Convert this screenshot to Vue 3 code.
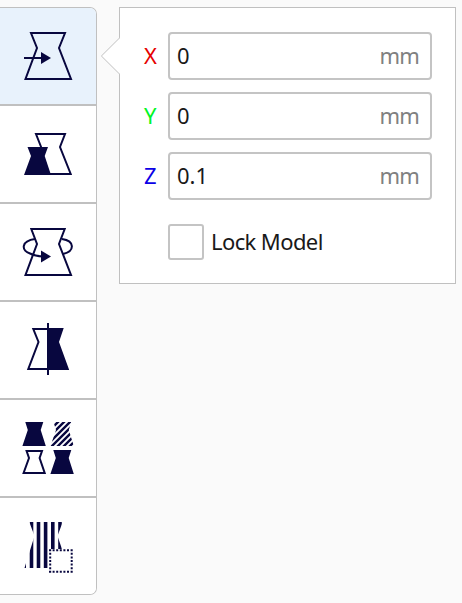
<script setup>
import { ref } from 'vue'

const axes = ref([
  { name: 'X', value: '0' },
  { name: 'Y', value: '0' },
  { name: 'Z', value: '0.1' },
])
</script>

<template>
  <main class="stage">
    <nav class="toolbar">
      <button class="tool active" aria-label="Move">
        <svg viewBox="0 8 96 96">
          <path class="line" d="M31 33H65L59 48L71 79H25.5L37 48Z" />
          <path class="line" d="M24 58H43" />
          <path class="solid" d="M41 52L51 58L41 64Z" />
        </svg>
      </button>
      <button class="tool" aria-label="Scale">
        <svg viewBox="0 106 96 96">
          <path class="line" d="M41.5 148L36 134H65L60 147L70.7 174H49" />
          <path class="solid" d="M27.5 147H48L44.7 156L51 175H24L31 156Z" />
        </svg>
      </button>
      <button class="tool" aria-label="Rotate">
        <svg viewBox="0 204 96 96">
          <path class="line" d="M31.3 229H64.7L59 244L71 275H25.5L37 244Z" />
          <path class="line" d="M35 239C21 241 21 250 30 253.5Q35 256 43 256.5M62 239C75 241 75 251 63 254" />
          <path class="solid" d="M41 250.5L51 256.5L41 262.5Z" />
        </svg>
      </button>
      <button class="tool" aria-label="Mirror">
        <svg viewBox="0 302 96 96">
          <path class="line" d="M48 329H33.3L38.5 342L28.3 369H48" />
          <path class="solid" d="M48 328H63.7L59 342L69.2 370H48Z" />
          <path class="line" d="M48 323V375" />
        </svg>
      </button>
      <button class="tool" aria-label="Per model settings">
        <svg viewBox="0 400 96 96">
          <defs>
            <clipPath id="hatched"><path d="M53.5 422H71.2L68.8 430L73.8 446H50.5L56 430Z" /></clipPath>
          </defs>
          <path class="solid" d="M25.3 422H43.3L40.7 430L45.8 446H22.4L27.8 430Z" />
          <path
            class="hatch"
            clip-path="url(#hatched)"
            d="M46 434L64 416M46 440L70 416M46 446L76 416M46 452L80 418M50 454L80 424M56 454L80 430M62 454L80 436M68 454L80 442"
          />
          <path class="line" d="M26.6 451H42L39.6 458L44.7 473H23.6L29 458Z" />
          <path class="solid" d="M53.3 450H71.3L68.7 458L73.8 474H50.4L55.8 458Z" />
        </svg>
      </button>
      <button class="tool" aria-label="Support blocker">
        <svg viewBox="0 498 96 96">
          <defs>
            <clipPath id="striped"><path d="M29.3 522H62.7L57.5 536L63 552V568H24.5L34.5 536Z" /></clipPath>
          </defs>
          <path class="stripes" clip-path="url(#striped)" d="M24.2 522V568M31.5 522V568M38.5 522V568M45.6 522V568M52.8 522V568M60 522V568" />
          <path class="clear" d="M49 549H73V573H49Z" />
          <path class="dots" d="M49 550.3H73M49 571.7H73M50.2 549.2V573M71.7 549.2V573" />
        </svg>
      </button>
    </nav>

    <section class="panel">
      <svg class="pointer" viewBox="0 0 20 39">
        <path d="M20 .5L1.4 19L20 37.5" />
      </svg>
      <label v-for="axis in axes" :key="axis.name" class="axis">
        <span class="name" :class="axis.name.toLowerCase()">{{ axis.name }}</span>
        <span class="field"><span>{{ axis.value }}</span><span class="unit">mm</span></span>
      </label>
      <label class="lock"><span class="box"></span><span class="caption">Lock Model</span></label>
    </section>
  </main>
</template>

<style>
body {
  background: #fafafa;
}
</style>

<style scoped>
.stage {
  display: flex;
  align-items: flex-start;
  gap: 22px;
  box-sizing: border-box;
  width: 462px;
  height: 603px;
  padding-top: 7px;
  background: #fafafa;
  font-family: "Noto Sans", sans-serif;
  font-size: 22px;
  line-height: 30px;
  color: #191919;
}
.toolbar {
  box-sizing: border-box;
  width: 97px;
  height: 588px;
  flex: none;
  overflow: hidden;
  border: 1px solid #c0c0c0;
  border-left: 0;
  border-radius: 0 7px 7px 0;
  background: #fff;
}
.tool {
  display: block;
  box-sizing: content-box;
  width: 96px;
  height: 96px;
  padding: 0;
  border: 0;
  background: #fff;
}
.tool + .tool {
  border-top: 2px solid #c0c0c0;
}
.tool.active {
  background: #e8f2fc;
}
.tool svg {
  display: block;
  width: 96px;
  height: 96px;
}
.line {
  fill: none;
  stroke: #08073f;
  stroke-width: 2;
}
.solid {
  fill: #08073f;
}
.hatch {
  fill: none;
  stroke: #08073f;
  stroke-width: 2.4;
}
.stripes {
  fill: none;
  stroke: #08073f;
  stroke-width: 3.6;
}
.clear {
  fill: #fff;
}
.dots {
  fill: none;
  stroke: #08073f;
  stroke-width: 2;
  stroke-dasharray: 2 1.6;
}
.panel {
  position: relative;
  box-sizing: border-box;
  display: flex;
  flex-direction: column;
  gap: 12px;
  width: 337px;
  height: 277px;
  padding: 24px 23px 0 24px;
  border: 1px solid #c0c0c0;
  background: #fff;
}
.pointer {
  position: absolute;
  left: -20px;
  top: 29px;
  width: 20px;
  height: 39px;
}
.pointer path {
  fill: #fff;
  stroke: #c0c0c0;
}
.axis {
  display: flex;
  align-items: center;
  height: 48px;
}
.name {
  width: 24px;
  padding-bottom: 2px;
}
.x {
  color: #e60000;
}
.y {
  color: #00f526;
}
.z {
  color: #0b00e6;
}
.field {
  display: flex;
  flex: 1;
  align-items: center;
  justify-content: space-between;
  box-sizing: border-box;
  height: 48px;
  padding: 0 11px 2px 7px;
  border: 2px solid #c4c4c4;
  border-radius: 4px;
}
.unit {
  letter-spacing: -0.8px;
  color: #808080;
}
.lock {
  display: flex;
  align-items: center;
  gap: 7px;
  margin: 12px 0 0 24px;
}
.caption {
  padding-bottom: 2px;
  letter-spacing: -0.6px;
}
.box {
  box-sizing: border-box;
  width: 36px;
  height: 36px;
  border: 2px solid #c4c4c4;
  border-radius: 3px;
}
</style>
